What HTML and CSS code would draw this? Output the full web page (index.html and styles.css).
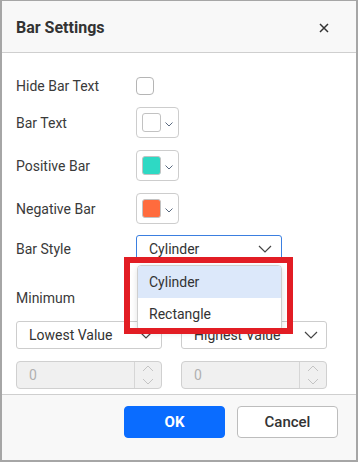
FILE: index.html
```html
<!DOCTYPE html>
<html>
<head>
    <title>Bar Settings</title>
    <link rel="stylesheet" href="styles.css">
</head>
<body>
    <div class="dialog">
        <div class="dialog-header">
            <h2 class="dialog-title">Bar Settings</h2>
            <button class="close-btn" type="button">
                <svg width="10" height="10" viewBox="0 0 10 10"><path d="M1 1 L9 9 M9 1 L1 9" stroke="#333" stroke-width="1.5" fill="none"/></svg>
            </button>
        </div>

        <div class="dialog-body">
            <div class="row row-check">
                <label class="field-label">Hide Bar Text</label>
                <span class="checkbox"></span>
            </div>
            <div class="row">
                <label class="field-label">Bar Text</label>
                <div class="color-picker">
                    <span class="swatch"></span>
                    <svg class="mini-caret" width="8" height="5" viewBox="0 0 8 5"><path d="M0.5 0.5 L4 4 L7.5 0.5" stroke="#5a6a80" stroke-width="1" fill="none"/></svg>
                </div>
            </div>
            <div class="row">
                <label class="field-label">Positive Bar</label>
                <div class="color-picker">
                    <span class="swatch swatch-teal"></span>
                    <svg class="mini-caret" width="8" height="5" viewBox="0 0 8 5"><path d="M0.5 0.5 L4 4 L7.5 0.5" stroke="#5a6a80" stroke-width="1" fill="none"/></svg>
                </div>
            </div>
            <div class="row">
                <label class="field-label">Negative Bar</label>
                <div class="color-picker">
                    <span class="swatch swatch-orange"></span>
                    <svg class="mini-caret" width="8" height="5" viewBox="0 0 8 5"><path d="M0.5 0.5 L4 4 L7.5 0.5" stroke="#5a6a80" stroke-width="1" fill="none"/></svg>
                </div>
            </div>
            <div class="row row-style">
                <label class="field-label">Bar Style</label>
                <div class="select-wrap">
                    <div class="select select-open">
                        <span>Cylinder</span>
                        <svg class="caret" width="14" height="8" viewBox="0 0 14 8"><path d="M1 1 L7 7 L13 1" stroke="#444" stroke-width="1.2" fill="none"/></svg>
                    </div>
                    <ul class="popup">
                        <li class="popup-item active">Cylinder</li>
                        <li class="popup-item">Rectangle</li>
                    </ul>
                    <div class="callout"></div>
                </div>
            </div>

            <div class="section-label">Minimum</div>
            <div class="pair">
                <div class="select">
                    <span>Lowest Value</span>
                    <svg class="caret" width="14" height="8" viewBox="0 0 14 8"><path d="M1 1 L7 7 L13 1" stroke="#444" stroke-width="1.2" fill="none"/></svg>
                </div>
                <div class="select">
                    <span>Highest Value</span>
                    <svg class="caret" width="14" height="8" viewBox="0 0 14 8"><path d="M1 1 L7 7 L13 1" stroke="#444" stroke-width="1.2" fill="none"/></svg>
                </div>
            </div>
            <div class="pair pair-numeric">
                <div class="numeric">
                    <span class="numeric-value">0</span>
                    <span class="spin">
                        <svg width="12" height="22" viewBox="0 0 12 22"><path d="M1 7 L6 2 L11 7 M1 15 L6 20 L11 15" stroke="#c4c4c4" stroke-width="1" fill="none"/></svg>
                    </span>
                </div>
                <div class="numeric">
                    <span class="numeric-value">0</span>
                    <span class="spin">
                        <svg width="12" height="22" viewBox="0 0 12 22"><path d="M1 7 L6 2 L11 7 M1 15 L6 20 L11 15" stroke="#c4c4c4" stroke-width="1" fill="none"/></svg>
                    </span>
                </div>
            </div>
        </div>

        <div class="dialog-footer">
            <button class="btn btn-primary" type="button">OK</button>
            <button class="btn btn-default" type="button">Cancel</button>
        </div>
    </div>
</body>
</html>
```

FILE: styles.css
```css
body {
    font-family: "Roboto", "Liberation Sans", Arial, sans-serif;
    background-color: #ffffff;
    margin: 0;
    padding: 0;
}

.dialog {
    width: 358px;
    height: 462px;
    box-sizing: border-box;
    border: 1px solid #a6a6a6;
    border-left-width: 2px;
    border-right-width: 2px;
    border-bottom-width: 2px;
    display: flex;
    flex-direction: column;
    background-color: #ffffff;
}

.dialog-header {
    height: 51px;
    flex-shrink: 0;
    background-color: #f8f8f8;
    border-bottom: 1px solid #cfcfcf;
    display: flex;
    align-items: center;
    justify-content: space-between;
    padding: 0 27px 0 14px;
}

.dialog-title {
    margin: 2px 0 0 0;
    font-size: 16px;
    font-weight: bold;
    color: #333333;
}

.close-btn {
    border: none;
    background: none;
    padding: 0;
    width: 10px;
    height: 10px;
    margin-top: 2px;
    display: flex;
}

.dialog-body {
    flex: 1;
    padding: 24px 15px 0 14px;
    display: flex;
    flex-direction: column;
}

.row {
    display: grid;
    grid-template-columns: 120px auto;
    align-items: center;
    margin-top: 12px;
}

.row-check {
    margin-top: 0;
    height: 18px;
}

.row-style {
    margin-top: 11px;
}

.field-label,
.section-label {
    font-size: 14px;
    line-height: 16px;
    color: #3a3a3a;
}

.checkbox {
    width: 18px;
    height: 18px;
    box-sizing: border-box;
    border: 1px solid #b5b5b5;
    border-radius: 4px;
}

.color-picker {
    width: 43px;
    height: 31px;
    box-sizing: border-box;
    border: 1px solid #cdcdcd;
    border-radius: 4px;
    display: flex;
    align-items: center;
    padding-left: 5px;
    gap: 4px;
}

.swatch {
    width: 19px;
    height: 19px;
    box-sizing: border-box;
    border: 1px solid #c2c2c2;
    border-radius: 3px;
    background-color: #ffffff;
}

.swatch-teal {
    background-color: #2ed9c4;
}

.swatch-orange {
    background-color: #ff6b3d;
}

.mini-caret {
    margin-top: 3px;
}

.select-wrap {
    position: relative;
    width: 146px;
}

.select {
    height: 27px;
    box-sizing: border-box;
    border: 1px solid #cdcdcd;
    border-radius: 3px;
    display: flex;
    align-items: center;
    justify-content: space-between;
    padding: 0 9px 0 12px;
    font-size: 14px;
    color: #333333;
}

.select-open {
    border-color: #3b7fe0;
}

.popup {
    position: absolute;
    left: 1px;
    top: 30px;
    width: 145px;
    margin: 0;
    padding: 0;
    list-style: none;
    background-color: #ffffff;
    border: 1px solid #cfcfcf;
    border-radius: 4px;
    box-sizing: border-box;
    box-shadow: 0 2px 6px rgba(0, 0, 0, 0.12);
    overflow: hidden;
    z-index: 2;
}

.popup-item {
    height: 32px;
    line-height: 32px;
    padding-left: 11px;
    font-size: 14px;
    color: #333333;
}

.popup-item.active {
    background-color: #dce8fa;
}

.callout {
    position: absolute;
    left: -12px;
    top: 22px;
    width: 169px;
    height: 77px;
    box-sizing: border-box;
    border: 6px solid #e21d24;
    z-index: 3;
}

.section-label {
    margin-top: 28px;
}

.pair {
    display: grid;
    grid-template-columns: 146px 146px;
    column-gap: 19px;
    margin-top: 15px;
}

.pair .select {
    height: 28px;
    padding-right: 8px;
}

.pair-numeric {
    margin-top: 12px;
}

.numeric {
    height: 28px;
    box-sizing: border-box;
    border: 1px solid #d0d0d0;
    border-radius: 4px;
    background-color: #f0f0f0;
    display: flex;
    align-items: center;
}

.numeric-value {
    flex: 1;
    padding-left: 12px;
    font-size: 14px;
    color: #b0b0b0;
}

.spin {
    width: 26px;
    height: 100%;
    border-left: 1px solid #d6d6d6;
    display: flex;
    align-items: center;
    justify-content: center;
}

.dialog-footer {
    flex-shrink: 0;
    height: 54px;
    background-color: #f8f8f8;
    border-top: 1px solid #cfcfcf;
    display: flex;
    justify-content: flex-end;
    align-items: flex-start;
    gap: 12px;
    padding: 11px 18px 0 0;
}

.btn {
    width: 101px;
    height: 32px;
    border-radius: 4px;
    font-family: "Roboto", "Liberation Sans", Arial, sans-serif;
    font-size: 15px;
    cursor: pointer;
}

.btn-primary {
    background-color: #0a6cff;
    border: 1px solid #0a6cff;
    color: #ffffff;
    font-weight: bold;
}

.btn-default {
    background-color: #ffffff;
    border: 1px solid #bdbdbd;
    color: #333333;
    font-weight: 500;
}
```
